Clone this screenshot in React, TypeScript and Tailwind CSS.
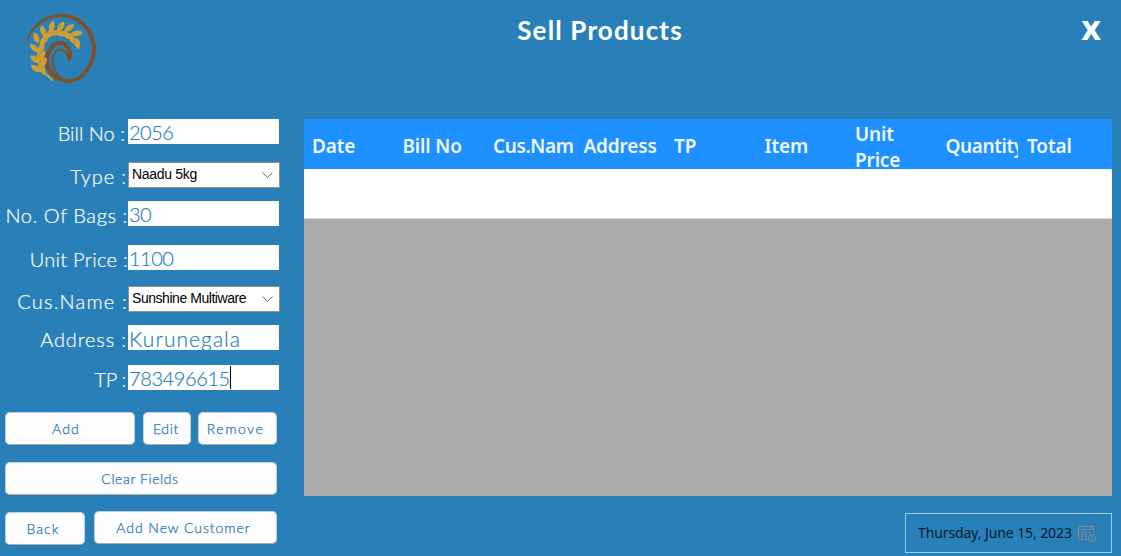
import React from "react";

const GRAINS: [number, number, number][] = [
  [97, 208, 70], [78, 206, 35], [100, 188, -60],
  [75, 178, 35], [96, 168, -60],
  [73, 144, 45], [94, 145, -60],
  [79, 114, 70], [102, 121, -45],
  [99, 93, 75], [114, 106, -25],
  [125, 80, 105], [130, 99, 5],
  [152, 80, 125], [150, 100, 25],
  [177, 84, 145], [170, 106, 45],
  [200, 100, 175], [185, 115, 65],
  [202, 130, 80],
];

function Logo() {
  return (
    <svg className="h-[100px] w-[110px]" viewBox="0 0 330 300" fill="none">
      <path
        d="M47 136C54 78 103 41 155 41C215 41 258 90 258 145C258 205 215 249 175 249V238C213 237 245 195 245 147C245 95 205 54 155 52C108 50 62 83 50 134Z"
        fill="#7a5230"
      />
      <path d="M178 243C137 242 111 215 111 181C111 150 130 129 149 129C170 130 183 148 179 174" stroke="#7a5230" strokeWidth="13" strokeLinecap="round" />
      <path d="M176 181C170 151 156 145 143 151C120 163 124 201 148 230" stroke="#7a5230" strokeWidth="6" strokeLinecap="round" />
      <path d="M127 240L92 208C78 180 82 140 106 112C136 82 178 90 202 130" stroke="#cf9d30" strokeWidth="6" strokeLinecap="round" />
      {GRAINS.map(([x, y, angle]) => (
        <path
          key={`${x}-${y}`}
          d="M-18 0C-10 -11 8 -12 18 0C8 11 -10 11 -18 0Z"
          fill="#cf9d30"
          transform={`translate(${x} ${y}) rotate(${angle})`}
        />
      ))}
    </svg>
  );
}

type FieldProps = {
  label: string;
  labelClass: string;
  value: string;
  valueClass?: string;
  rowClass?: string;
  select?: boolean;
  caret?: boolean;
};

function Field({ label, labelClass, value, valueClass = "", rowClass = "", select, caret }: FieldProps) {
  return (
    <div className={`flex h-[26px] w-[280px] ${rowClass}`}>
      <div className={`flex w-[128px] shrink-0 justify-end whitespace-pre text-[20px] leading-[26px] font-light text-white [-webkit-text-stroke:0.2px] ${labelClass}`}>
        {label}
      </div>
      {select ? (
        <div className="flex flex-1 items-center justify-between border border-[#8d8f94] bg-white pr-1.5 pl-[3px] font-['Liberation_Sans',sans-serif] text-[14px] leading-none text-black">
          <span className={`pb-0.5 ${valueClass}`}>{value}</span>
          <svg className="h-[6px] w-[11px]" viewBox="0 0 11 6" fill="none" stroke="#666" strokeWidth="1">
            <path d="M.5 .5L5.5 5.3L10.5 .5" />
          </svg>
        </div>
      ) : (
        <div className="mr-px flex h-[25px] flex-1 items-center bg-white pl-px text-[20px] leading-[25px] font-light text-[#2980b9] [-webkit-text-stroke:0.2px]">
          <span className={`pt-px ${valueClass}`}>{value}</span>
          {caret && <span className="h-[23px] w-px bg-black" />}
        </div>
      )}
    </div>
  );
}

function Button({ className, text, children }: { className: string; text: string; children: string }) {
  return (
    <button className={`flex items-center justify-center rounded-[5px] border border-[#b9d2e4] border-b-[#a9abad] bg-[#fdfdfd] text-[14px] font-light text-[#1c75b4] [-webkit-text-stroke:0.25px] ${className}`}>
      <span className={`pb-px ${text}`}>{children}</span>
    </button>
  );
}

const COLUMNS = ["Date", "Bill No", "Cus.Nam", "Address", "TP", "Item", "Unit Price", "Quantity", "Total"];

function CalendarIcon() {
  return (
    <svg className="h-[19px] w-[20px]" viewBox="0 0 20 19" fill="none" stroke="#85868f" strokeWidth="1">
      <path d="M11 15.5H1.5V2.5H16.5V9M1.5 5.5H16.5M4.5 .5V3M13.500 .5V3" />
      <path d="M4 8.500H6M7.500 8.500H9.500M11 8.500H13M4 11H6M7.500 11H9.500M4 13.500H6M7.500 13.500H9.500" strokeWidth="1.400" />
      <circle cx="15" cy="14" r="3.700" />
      <path d="M15 11.800V14H17" />
    </svg>
  );
}

export default function App() {
  return (
    <div className="flex h-[556px] w-[1121px] flex-col overflow-hidden bg-[#2980b9] font-[Lato,sans-serif]">
      <header className="flex h-[119px] items-start">
        <div className="w-[300px] pl-[10px]">
          <Logo />
        </div>
        <h1 className="w-[600px] pt-[12px] text-center text-[26px] leading-9 font-bold tracking-[1.15px] text-white">Sell Products</h1>
        <div className="flex flex-1 justify-end pt-[7px] pr-[20px] font-['Open_Sans',sans-serif] text-[34px] leading-10 font-bold text-white">
          <button className="leading-10">x</button>
        </div>
      </header>

      <main className="flex flex-1">
        <aside className="flex w-[304px] flex-col">
          <Field label="Bill No :" labelClass="pr-[3px] pt-px tracking-[0px]" value="2056" valueClass="tracking-[-0.5px]" />
          <Field rowClass="mt-[17px]" label="Type :" labelClass="pt-px pr-[1px] tracking-[0.9px]" value="Naadu 5kg" valueClass="tracking-[-0.3px]" select />
          <Field rowClass="mt-[13px]" label="No. Of Bags :" labelClass="pt-px tracking-[0.6px]" value="30" valueClass="tracking-[-0.5px]" />
          <Field rowClass="mt-[18px]" label="Unit Price :" labelClass="pt-px tracking-[0.3px]" value="1100" valueClass="tracking-[-0.5px]" />
          <Field rowClass="mt-[15px]" label="Cus.Name :" labelClass="pt-[2px] tracking-[1.2px]" value="Sunshine Multiware" valueClass="tracking-[-0.45px]" select />
          <Field rowClass="mt-[13px]" label="Address :" labelClass="pt-px pr-[1px] tracking-[0.85px]" value="Kurunegala" valueClass="text-[21px] tracking-[1.05px]" />
          <Field rowClass="mt-[14px]" label="TP :" labelClass="pt-px pr-[2px] tracking-[-0.3px]" value="783496615" valueClass="tracking-[-0.4px]" caret />

          <div className="mt-[21px] flex pl-[5px]">
            <Button className="h-[33px] w-[130px] pr-2" text="tracking-[1.2px]">Add</Button>
            <Button className="ml-[8px] h-[33px] w-[48px] pr-0.5" text="tracking-[0.7px]">Edit</Button>
            <Button className="ml-[7px] h-[33px] w-[79px] pr-1" text="tracking-[1.5px]">Remove</Button>
          </div>
          <div className="mt-[17px] flex pl-[5px]">
            <Button className="h-[33px] w-[272px] pr-0.5" text="tracking-[0.6px]">Clear Fields</Button>
          </div>
          <div className="mt-[16px] flex pl-[5px]">
            <Button className="mt-px h-[33px] w-[80px] pr-1" text="tracking-[1.1px]">Back</Button>
            <Button className="ml-[9px] h-[33px] w-[183px] pr-1" text="tracking-[0.95px]">Add New Customer</Button>
          </div>
        </aside>

        <section className="flex w-[808px] flex-col">
          <div className="flex h-[377px] flex-col bg-[#ababab] font-['Noto_Sans',sans-serif]">
            <div className="grid h-[50px] grid-cols-[90.500px_90.500px_90.500px_90.500px_90.500px_90.500px_90.500px_81.500px_1fr] bg-[#1e90ff] text-[19px] leading-[26px] font-semibold text-[#eef8ff]">
              {COLUMNS.map((name) => (
                <div key={name} className="flex h-[50px] items-center overflow-hidden pl-[8px]">
                  <div className={`mr-px w-full overflow-hidden ${name === "Unit Price" ? "pt-[6px] tracking-[-0.15px]" : name === "Quantity" || name === "Cus.Nam" ? "pt-[3px] tracking-[-0.4px]" : "pt-[3px] tracking-[-0.15px]"}`}>
                    {name === "Unit Price" ? <span className="block w-[50px]">{name}</span> : name}
                  </div>
                </div>
              ))}
            </div>
            <div className="h-[50px] border-b border-[#d5d5d5] bg-white" />
          </div>
          <div className="mt-[17px] ml-auto flex h-[40px] w-[207px] items-center border border-[#9fd0ee] pl-[12px] font-['Noto_Sans',sans-serif] text-[14px] text-[#061a2b]">
            <span className="pb-px tracking-[-0.1px]">Thursday, June 15, 2023</span>
            <span className="ml-[5px]">
              <CalendarIcon />
            </span>
          </div>
        </section>
      </main>
    </div>
  );
}
